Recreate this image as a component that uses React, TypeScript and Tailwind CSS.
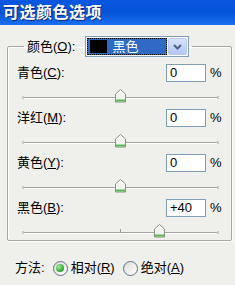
import React from 'react';

const FONT = { fontFamily: '"Liberation Sans", "Noto Sans CJK SC", sans-serif' };

const rows = [
  { name: '青色', key: 'C', value: '0', pos: 0 },
  { name: '洋红', key: 'M', value: '0', pos: 0 },
  { name: '黄色', key: 'Y', value: '0', pos: 0 },
  { name: '黑色', key: 'B', value: '+40', pos: 40, tick: true },
];

const Thumb = () => (
  <svg width="11" height="14" viewBox="0 0 11 14">
    <path d="M0.5 5 L5.5 0.5 L10.5 5 V13 H0.5 Z" fill="#f3f3ee" stroke="#8e8e86" />
    <path d="M1 11.5 H10" stroke="#5cb857" strokeWidth="2" />
    <path d="M1.5 5.5 L5.5 1.8 L9.5 5.5" stroke="#ffffff" fill="none" />
  </svg>
);

const Slider = ({ pos, tick }: { pos: number; tick?: boolean }) => {
  const center = 98.5 + (pos / 100) * 98.5;
  return (
    <div className="relative ml-[14px] w-[197px] h-[14px]">
      <div className="absolute left-0 right-0 top-[8px] h-[1px] bg-[#a3a3a0]" />
      <div className="absolute left-0 right-0 top-[9px] h-[1px] bg-white" />
      <div className="absolute left-0 top-[7px] w-[2px] h-[3px] bg-[#c8c8c4]" />
      <div className="absolute right-0 top-[7px] w-[2px] h-[3px] bg-[#c8c8c4]" />
      {tick && <div className="absolute left-[98px] top-[5px] w-[1px] h-[4px] bg-[#9a9a96]" />}
      <div className="absolute top-0" style={{ left: center - 5.5 }}>
        <Thumb />
      </div>
    </div>
  );
};

const Radio = ({ checked }: { checked?: boolean }) => (
  <div className="w-[15px] h-[15px] rounded-full border border-[#5f6f86] bg-gradient-to-br from-[#dcdcd6] to-white flex items-center justify-center">
    {checked && (
      <div className="w-[8px] h-[8px] rounded-full bg-[radial-gradient(circle_at_35%_35%,#a6f19c,#27a32a_70%)]" />
    )}
  </div>
);

export default function App() {
  return (
    <div className="w-[235px] h-[285px] overflow-hidden bg-[#efefec] text-[13px] text-black" style={FONT}>
      {/* Title bar */}
      <div className="h-[25px] bg-gradient-to-b from-[#0a58e0] via-[#0553d8] to-[#1a6ff0] flex items-center pl-[3px]">
        <span className="text-white text-[16px] font-bold tracking-[0.5px] [text-shadow:1px_1px_0_#0a2a80]">
          可选颜色选项
        </span>
      </div>

      <fieldset className="ml-[7px] mt-[11px] w-[225px] border border-[#a7a7a2] rounded-[2px] shadow-[inset_1px_1px_0_#fff,1px_1px_0_#fff] pb-[2px]">
        <legend className="ml-[16px] px-[3px] flex items-center h-[21px]">
          <span className="pr-[10px]">
            颜色(<span className="underline">O</span>):
          </span>
          <div className="w-[104px] h-[21px] border border-[#7f9db9] bg-white flex items-center p-[1px]">
            <div className="flex-1 h-full bg-[#316ac5] border border-dotted border-[#000] flex items-center pl-[2px]">
              <div className="w-[17px] h-[13px] bg-black" />
              <span className="text-white ml-[5px]">黑色</span>
            </div>
            <div className="w-[19px] h-full ml-[1px] rounded-[2px] bg-gradient-to-b from-[#d6e2fd] to-[#b4c8f6] border border-[#b8c9ef] flex items-center justify-center">
              <svg width="9" height="6" viewBox="0 0 9 6">
                <path d="M1 1 L4.5 4.5 L8 1" stroke="#4d6185" strokeWidth="2" fill="none" />
              </svg>
            </div>
          </div>
        </legend>

        <div className="pt-[7px] flex flex-col">
          {rows.map((r, i) => (
            <div key={r.key} className={i < rows.length - 1 ? 'mb-[6px]' : ''}>
              <div className="flex items-center h-[18px]">
                <span className="pl-[9px] w-[158px]">
                  {r.name}(<span className="underline">{r.key}</span>):
                </span>
                <div className="w-[40px] h-[18px] border border-[#7f9db9] bg-white pl-[3px] leading-[16px]">
                  {r.value}
                </div>
                <span className="ml-[4px]">%</span>
              </div>
              <div className="mt-[7px]">
                <Slider pos={r.pos} tick={r.tick} />
              </div>
            </div>
          ))}
        </div>
      </fieldset>

      {/* Method */}
      <div className="mt-[19px] pl-[15px] flex items-center h-[16px]">
        <span className="mr-[8px]">方法:</span>
        <Radio checked />
        <span className="ml-[3px]">
          相对(<span className="underline">R</span>)
        </span>
        <div className="ml-[8px]">
          <Radio />
        </div>
        <span className="ml-[3px]">
          绝对(<span className="underline">A</span>)
        </span>
      </div>
    </div>
  );
}
